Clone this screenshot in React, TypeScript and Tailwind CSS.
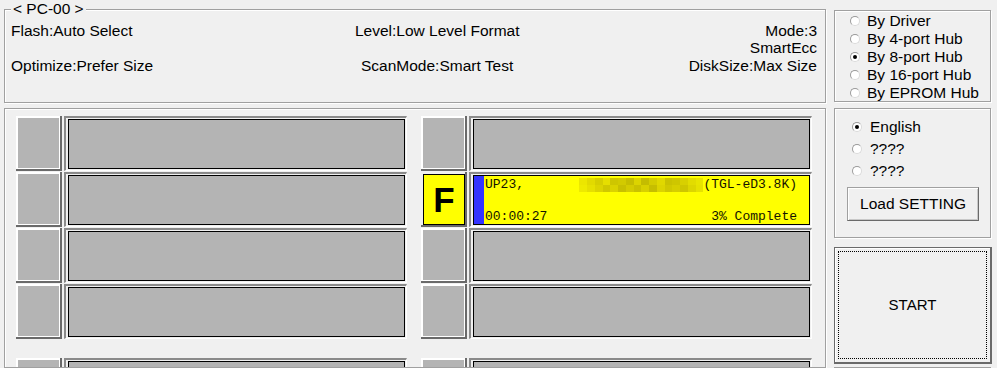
import React from "react";

const GROUP =
  "border border-[#a0a0a0] shadow-[inset_1px_1px_0_#ffffff,1px_1px_0_#ffffff]";

const BLUR_TOP = [
  "bg-[#ece600]", "bg-[#e2da00]", "bg-[#d6ce00]", "bg-[#e6de00]",
  "bg-[#cec600]", "bg-[#d2ca00]", "bg-[#c6be00]", "bg-[#dcd400]",
  "bg-[#c4bc00]", "bg-[#d4cc00]", "bg-[#e0d800]", "bg-[#cac200]",
  "bg-[#cec600]", "bg-[#d8d000]", "bg-[#e2dc00]", "bg-[#e8e400]",
];
const BLUR_BOTTOM = [
  "bg-[#eeea00]", "bg-[#e6e000]", "bg-[#dcd400]", "bg-[#d0c800]",
  "bg-[#dad200]", "bg-[#c8c000]", "bg-[#d4cc00]", "bg-[#cac200]",
  "bg-[#d8d000]", "bg-[#c6be00]", "bg-[#dcd400]", "bg-[#d0c800]",
  "bg-[#d6ce00]", "bg-[#cec600]", "bg-[#dcd600]", "bg-[#e6e200]",
];

type RadioProps = { label: string; checked?: boolean; gap: string };

const Radio = ({ label, checked, gap }: RadioProps) => (
  <div className="flex items-center">
    <span className="flex h-[10px] w-[10px] items-center justify-center rounded-full border border-[#9a9a9a] border-r-[#dadada] border-b-[#dadada] bg-white">
      {checked && <span className="h-[4px] w-[4px] rounded-full bg-black" />}
    </span>
    <span className={gap}>{label}</span>
  </div>
);

const Slot = ({ active }: { active?: boolean }) => (
  <div className="flex h-[56px] shrink-0 gap-[2px]">
    {/* port square */}
    <div className="flex h-[55px] w-[46px] border-r-2 border-b-2 border-[#6a6a6a]">
      {active ? (
        <div className="flex flex-1 pl-[2px] pt-[2px]">
          <div className="flex flex-1 items-center justify-center border border-black bg-[#ffff00] text-[35px] leading-none font-bold">
            F
          </div>
        </div>
      ) : (
        <div className="flex-1 border-t-2 border-l-2 border-r border-b border-white bg-[#b4b4b4]" />
      )}
    </div>

    {/* status bar */}
    <div className="flex h-[55px] w-[343px] border-t-2 border-l-2 border-r border-b border-t-[#8a8a8a] border-l-[#8a8a8a] border-r-white border-b-white pt-[1px] pl-[2px] pr-[1px] pb-[1px]">
      {active ? (
        <div className="flex flex-1 border border-black bg-[#ffff00]">
          <div className="w-[10px] bg-[#3333ff]" />
          <div className="flex flex-1 flex-col justify-between pt-[1px] pl-[1px] pr-[12px] font-['Liberation_Mono','Courier_New',monospace] text-[13px] leading-[15px] whitespace-pre text-[#141400]">
            <div className="flex justify-between">
              <span>UP23,</span>
              <div className="flex">
                <div className="mt-[1px] flex w-[124px] flex-col">
                  <div className="flex h-[7px]">
                    {BLUR_TOP.map((c, i) => (
                      <span key={i} className={`flex-1 ${c}`} />
                    ))}
                  </div>
                  <div className="flex h-[7px]">
                    {BLUR_BOTTOM.map((c, i) => (
                      <span key={i} className={`flex-1 ${c}`} />
                    ))}
                  </div>
                </div>
                <span>(TGL-eD3.8K)</span>
              </div>
            </div>
            <div className="flex justify-between">
              <span>00:00:27</span>
              <span>3% Complete</span>
            </div>
          </div>
        </div>
      ) : (
        <div className="flex-1 border border-black bg-[#b4b4b4]" />
      )}
    </div>
  </div>
);

const PortColumn = ({ activeIndex }: { activeIndex?: number }) => (
  <div className="flex flex-col gap-[18px]">
    {[0, 1].map((g) => (
      <div key={g} className="flex shrink-0 flex-col">
        {[0, 1, 2, 3].map((r) => (
          <Slot key={r} active={g * 4 + r === activeIndex} />
        ))}
      </div>
    ))}
  </div>
);

const App = () => {
  return (
    <div className="flex h-[368px] w-[997px] overflow-hidden bg-[#f0f0f0] font-['Liberation_Sans',Arial,sans-serif] text-[15.5px] text-black">
      <div className="ml-[4px] flex w-[822px] shrink-0 flex-col">
        {/* settings summary */}
        <section className={`mt-[9px] h-[94px] shrink-0 ${GROUP}`}>
          <div className="-mt-[10px] ml-[6px] w-fit bg-[#f0f0f0] px-[2px] leading-[18px]">
            &lt; PC-00 &gt;
          </div>
          <div className="mt-[3.5px] flex pl-[6px] pr-[8px] leading-[17.5px] whitespace-nowrap">
            <div className="w-[344px]">
              <div>Flash:Auto Select</div>
              <div className="mt-[17.5px]">Optimize:Prefer Size</div>
            </div>
            <div className="flex-1">
              <div>Level:Low Level Format</div>
              <div className="mt-[17.5px] pl-[6px]">ScanMode:Smart Test</div>
            </div>
            <div className="text-right">
              <div>Mode:3</div>
              <div>SmartEcc</div>
              <div>DiskSize:Max Size</div>
            </div>
          </div>
        </section>

        {/* port grid */}
        <section className={`mt-[5px] min-h-0 flex-1 overflow-hidden pl-[11px] pt-[7px] ${GROUP}`}>
          <div className="flex gap-[14px]">
            <PortColumn />
            <PortColumn activeIndex={1} />
          </div>
        </section>
      </div>

      <div className="ml-[8px] flex w-[158px] shrink-0 flex-col">
        <section className={`mt-[10px] h-[92px] w-[157px] shrink-0 pt-[1px] pl-[15px] leading-[18px] whitespace-nowrap ${GROUP}`}>
          <Radio label="By Driver" gap="ml-[7px]" />
          <Radio label="By 4-port Hub" gap="ml-[7px]" />
          <Radio label="By 8-port Hub" gap="ml-[7px]" checked />
          <Radio label="By 16-port Hub" gap="ml-[7px]" />
          <Radio label="By EPROM Hub" gap="ml-[7px]" />
        </section>

        <section className={`mt-[6px] h-[130px] w-[157px] shrink-0 pt-[6.5px] ${GROUP}`}>
          <div className="pl-[17px] leading-[22px]">
            <Radio label="English" gap="ml-[8px]" checked />
            <Radio label="????" gap="ml-[8px]" />
            <Radio label="????" gap="ml-[8px]" />
          </div>
          <button className="mt-[5.5px] ml-[12px] flex h-[34px] w-[132px] items-center justify-center border border-[#a0a0a0] border-r-[#6a6a6a] border-b-[#6a6a6a] bg-[#f0f0f0] shadow-[inset_1px_1px_0_#ffffff,inset_-1px_-1px_0_#c8c8c8]">
            Load SETTING
          </button>
        </section>

        <button className="mt-[9px] flex h-[117px] w-[158px] shrink-0 border border-[#6a6a6a] border-r-2 border-b-2 bg-[#f0f0f0] p-[3px] shadow-[inset_1px_1px_0_#ffffff]">
          <span className="flex flex-1 items-center justify-center border border-dotted border-black text-[15px]">
            START
          </span>
        </button>

        <div className="mt-[3px] h-[10px] w-[157px] shrink-0 border-t border-l border-r border-[#a0a0a0]" />
      </div>
    </div>
  );
};

export default App;
